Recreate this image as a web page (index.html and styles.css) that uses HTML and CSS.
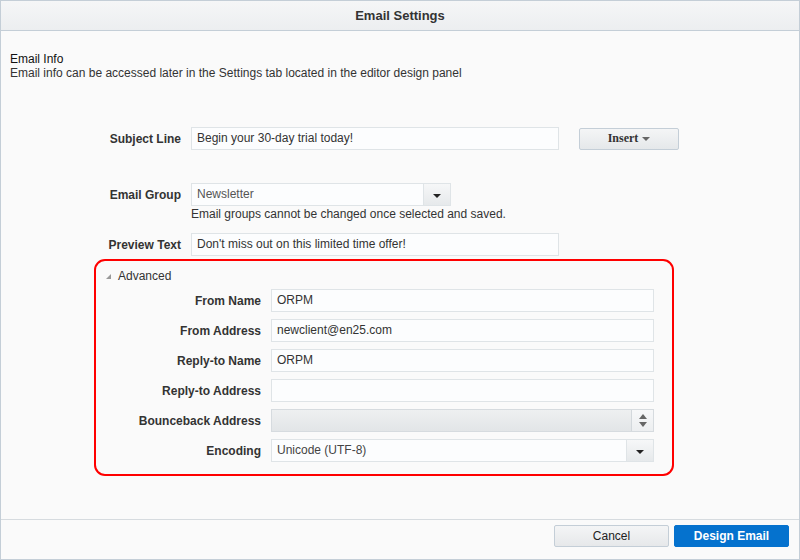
FILE: index.html
```html
<!DOCTYPE html>
<html>
<head>
<meta charset="utf-8">
<link rel="stylesheet" href="styles.css">
</head>
<body>
<div class="dialog">
  <div class="dlg-header">Email Settings</div>
  <div class="dlg-body">
    <div class="info-title">Email Info</div>
    <div class="info-desc">Email info can be accessed later in the Settings tab located in the editor design panel</div>

    <div class="main-form">
      <div class="row row-subject">
        <label class="lbl">Subject Line</label>
        <div class="field">Begin your 30-day trial today!</div>
        <button class="btn-insert">Insert <span class="caret"></span></button>
      </div>

      <div class="row row-group">
        <label class="lbl">Email Group</label>
        <div class="select select-group">
          <span class="select-val">Newsletter</span>
          <span class="select-btn"><span class="caret-dark"></span></span>
        </div>
      </div>
      <div class="help">Email groups cannot be changed once selected and saved.</div>

      <div class="row row-preview">
        <label class="lbl">Preview Text</label>
        <div class="field">Don't miss out on this limited time offer!</div>
      </div>
    </div>

    <div class="advanced">
      <div class="adv-head"><span class="disclose"></span>Advanced</div>
      <div class="adv-grid">
        <label class="lbl">From Name</label>
        <div class="field">ORPM</div>
        <label class="lbl">From Address</label>
        <div class="field">newclient@en25.com</div>
        <label class="lbl">Reply-to Name</label>
        <div class="field">ORPM</div>
        <label class="lbl">Reply-to Address</label>
        <div class="field"></div>
        <label class="lbl">Bounceback Address</label>
        <div class="select select-disabled">
          <span class="select-val"></span>
          <span class="spin-btn"><span class="tri-up"></span><span class="tri-down"></span></span>
        </div>
        <label class="lbl">Encoding</label>
        <div class="select">
          <span class="select-val">Unicode (UTF-8)</span>
          <span class="select-btn"><span class="caret-dark"></span></span>
        </div>
      </div>
    </div>
  </div>
  <div class="dlg-footer">
    <button class="btn btn-cancel">Cancel</button>
    <button class="btn btn-primary">Design Email</button>
  </div>
</div>
</body>
</html>
```

FILE: styles.css
```css
* { box-sizing: border-box; }
html, body { margin: 0; padding: 0; }
body {
  font-family: "Liberation Sans", Arial, sans-serif;
  font-size: 12px;
  color: #333;
  background: #fafafa;
}
.dialog {
  width: 800px;
  height: 560px;
  border: 1px solid #c4ced7;
  background: #fafafa;
  display: flex;
  flex-direction: column;
}
.dlg-header {
  height: 30px;
  border-bottom: 1px solid #c4ced7;
  background: linear-gradient(#f5f6f7, #eceef0);
  font-weight: bold;
  font-size: 13px;
  color: #333;
  text-align: center;
  line-height: 30px;
  flex: none;
}
.dlg-body {
  flex: 1;
  padding: 21px 9px 0 9px;
}
.info-title, .info-desc { line-height: 14px; }
.info-title { color: #111; }

.main-form { margin-top: 47px; }
.row {
  display: grid;
  grid-template-columns: 171px 368px 100px;
  column-gap: 10px;
  align-items: center;
}
.row-subject .btn-insert { margin-left: 10px; }
.row-group { margin-top: 33px; grid-template-columns: 171px 260px; }
.row-preview { margin-top: 12px; }
.help {
  margin: 1px 0 0 181px;
  line-height: 14px;
}
.lbl {
  font-weight: bold;
  text-align: right;
  color: #333;
  white-space: nowrap;
}
.field {
  height: 23px;
  border: 1px solid #dfe4e7;
  background: #fcfdfe;
  padding: 0 5px;
  line-height: 21px;
  color: #333;
  white-space: nowrap;
  overflow: hidden;
}
.btn-insert {
  height: 22px;
  width: 100px;
  border: 1px solid #c4ced7;
  border-radius: 2px;
  background: linear-gradient(#f4f5f6, #e5e8ea);
  font-family: "Liberation Serif", "Times New Roman", serif;
  font-weight: bold;
  font-size: 12px;
  color: #333;
  padding: 0;
  display: flex;
  align-items: center;
  justify-content: center;
  gap: 4px;
}
.caret {
  display: inline-block;
  width: 0; height: 0;
  border-left: 4px solid transparent;
  border-right: 4px solid transparent;
  border-top: 4px solid #666;
  margin-top: 1px;
}
.select {
  height: 23px;
  border: 1px solid #dfe4e7;
  background: #fcfdfe;
  display: flex;
  align-items: stretch;
}
.select-val {
  flex: 1;
  padding: 0 5px;
  line-height: 21px;
  color: #444;
}
.select-group .select-val { color: #555; }
.select-btn {
  width: 27px;
  border-left: 1px solid #dfe4e7;
  background: linear-gradient(#f6f7f8, #e6e9eb);
  display: flex;
  align-items: center;
  justify-content: center;
}
.caret-dark {
  width: 0; height: 0;
  border-left: 4px solid transparent;
  border-right: 4px solid transparent;
  border-top: 4px solid #222;
  margin-top: 2px;
}
.select-disabled {
  background: linear-gradient(#eef0f1, #e2e5e7);
  border-color: #d6dbdf;
}
.spin-btn {
  width: 22px;
  border-left: 1px solid #d3d8dc;
  background: linear-gradient(#f7f8f9, #eceef0);
  display: flex;
  flex-direction: column;
  align-items: center;
  justify-content: center;
  gap: 3px;
}
.tri-up {
  width: 0; height: 0;
  border-left: 4px solid transparent;
  border-right: 4px solid transparent;
  border-bottom: 5px solid #666;
}
.tri-down {
  width: 0; height: 0;
  border-left: 4px solid transparent;
  border-right: 4px solid transparent;
  border-top: 5px solid #666;
}

.advanced {
  margin: 3px 0 0 84px;
  width: 580px;
  border: 2px solid #ff0000;
  border-radius: 11px;
  padding: 8px 19px 12px 10px;
}
.adv-head {
  line-height: 14px;
  color: #333;
  display: flex;
  align-items: center;
}
.disclose {
  width: 0; height: 0;
  border-left: 5px solid transparent;
  border-bottom: 5px solid #999;
  margin: 1px 7px 0 0;
}
.adv-grid {
  margin-top: 6px;
  display: grid;
  grid-template-columns: 155px 383px;
  column-gap: 10px;
  row-gap: 7px;
  align-items: center;
}
.dlg-footer {
  flex: none;
  height: 40px;
  border-top: 1px solid #d6dbdf;
  padding: 5px 10px 0 0;
  display: flex;
  justify-content: flex-end;
  align-items: flex-start;
  gap: 5px;
}
.btn {
  width: 115px;
  height: 22px;
  font-family: "Liberation Sans", Arial, sans-serif;
  font-size: 12px;
  padding: 0;
  border-radius: 2px;
}
.btn-cancel {
  border: 1px solid #c4ced7;
  background: linear-gradient(#f4f5f6, #e6e8ea);
  color: #222;
}
.btn-primary {
  border: 1px solid #0572ce;
  background: #0572ce;
  color: #fff;
  font-weight: bold;
}
```
